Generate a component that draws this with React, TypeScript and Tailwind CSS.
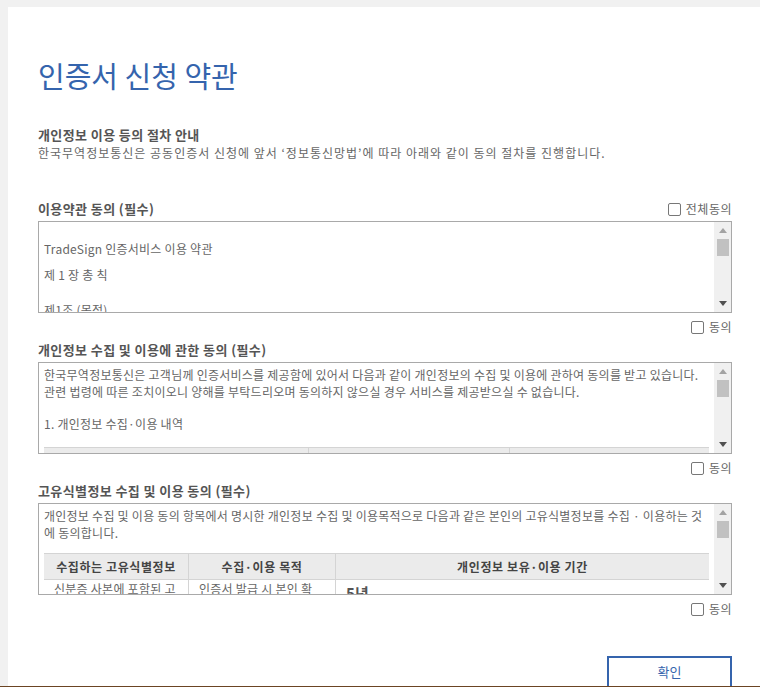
import React from "react";

const font = { fontFamily: '"Noto Sans CJK KR", "Noto Sans", sans-serif' };

const Check = ({ label }: { label: string }) => (
  <label className="flex items-center gap-[5px] text-[12px] leading-[18px] text-[#666] tracking-[0.5px]">
    <span className="w-[13px] h-[13px] border border-[#777] rounded-[2px] bg-white" />
    {label}
  </label>
);

const ScrollBar = () => (
  <div className="w-[17px] shrink-0 bg-[#f0f0f0] flex flex-col items-center">
    <div className="h-[17px] flex items-center justify-center">
      <svg width="8" height="5" viewBox="0 0 8 5">
        <path d="M0 5 L4 0 L8 5 Z" fill="#a3a3a3" />
      </svg>
    </div>
    <div className="w-[12px] h-[17px] bg-[#c1c1c1]" />
    <div className="flex-1" />
    <div className="h-[17px] flex items-center justify-center">
      <svg width="8" height="5" viewBox="0 0 8 5">
        <path d="M0 0 L8 0 L4 5 Z" fill="#505050" />
      </svg>
    </div>
  </div>
);

const Box = ({ children }: { children: React.ReactNode }) => (
  <div className="h-[92px] border border-[#a9a9a9] flex overflow-hidden bg-white">
    <div className="flex-1 overflow-hidden pl-[5px] pr-[5px] text-[12px] leading-[17px] text-[#666] tracking-[0.25px]">
      {children}
    </div>
    <ScrollBar />
  </div>
);

const Heading = ({ children }: { children: React.ReactNode }) => (
  <h3 className="text-[13px] leading-[18px] font-bold text-[#555] tracking-[0.4px]">{children}</h3>
);

export default function App() {
  return (
    <div
      className="w-[760px] h-[687px] bg-[#f1f1f1] pl-2 pt-[7px] overflow-hidden border-b border-[#6b4423] flex flex-col"
      style={font}
    >
      <div className="flex-1 bg-white pl-[30px] pr-[28px] pt-[50px] flex flex-col">
        <h1 className="text-[29px] leading-[36px] text-[#3564ad]">인증서 신청 약관</h1>

        <div className="mt-[33px]">
          <Heading>개인정보 이용 등의 절차 안내</Heading>
          <p className="text-[12px] leading-[18px] text-[#666] tracking-[1px]">
            한국무역정보통신은 공동인증서 신청에 앞서 ‘정보통신망법’에 따라 아래와 같이 동의 절차를 진행합니다.
          </p>
        </div>

        <div className="mt-[38px] flex items-center justify-between mb-[3px]">
          <Heading>이용약관 동의 (필수)</Heading>
          <Check label="전체동의" />
        </div>
        <Box>
          <p className="pt-[18px]">TradeSign 인증서비스 이용 약관</p>
          <p className="mt-[9px]">제 1 장 총 칙</p>
          <p className="mt-[18px]">제1조 (목적)</p>
        </Box>
        <div className="flex justify-end mt-[5px]">
          <Check label="동의" />
        </div>

        <div className="mt-[5px] mb-[3px]">
          <Heading>개인정보 수집 및 이용에 관한 동의 (필수)</Heading>
        </div>
        <Box>
          <p className="pt-[3px]">
            한국무역정보통신은 고객님께 인증서비스를 제공함에 있어서 다음과 같이 개인정보의 수집 및 이용에 관하여 동의를 받고 있습니다.
            <br />
            관련 법령에 따른 조치이오니 양해를 부탁드리오며 동의하지 않으실 경우 서비스를 제공받으실 수 없습니다.
          </p>
          <p className="mt-[15px]">1. 개인정보 수집·이용 내역</p>
          <div className="mt-[15px] grid grid-cols-[265px_201px_1fr] border-t border-[#d4d4d4]">
            <div className="h-[26px] bg-[#ebebeb] border-r border-[#d4d4d4]" />
            <div className="h-[26px] bg-[#ebebeb] border-r border-[#d4d4d4]" />
            <div className="h-[26px] bg-[#ebebeb]" />
          </div>
        </Box>
        <div className="flex justify-end mt-[5px]">
          <Check label="동의" />
        </div>

        <div className="mt-[5px] mb-[3px]">
          <Heading>고유식별정보 수집 및 이용 동의 (필수)</Heading>
        </div>
        <Box>
          <p className="pt-[3px] pr-[4px]">
            개인정보 수집 및 이용 동의 항목에서 명시한 개인정보 수집 및 이용목적으로 다음과 같은 본인의 고유식별정보를 수집 · 이용하는 것
            <br />
            에 동의합니다.
          </p>
          <div className="mt-[12px] grid grid-cols-[145px_147px_1fr] border-t border-[#d4d4d4]">
            <div className="h-[26px] bg-[#ebebeb] border-r border-b border-[#d4d4d4] flex items-center justify-center font-bold text-[#444] tracking-[0.6px]">
              수집하는 고유식별정보
            </div>
            <div className="h-[26px] bg-[#ebebeb] border-r border-b border-[#d4d4d4] flex items-center justify-center font-bold text-[#444] tracking-[0.6px]">
              수집·이용 목적
            </div>
            <div className="h-[26px] bg-[#ebebeb] border-b border-[#d4d4d4] flex items-center justify-center font-bold text-[#444] tracking-[0.6px]">
              개인정보 보유·이용 기간
            </div>
            <div className="border-r border-[#d4d4d4] pl-[10px] whitespace-nowrap">
              신분증 사본에 포함된 고
              <br />
              유식별정보
            </div>
            <div className="border-r border-[#d4d4d4] pl-[10px] whitespace-nowrap">
              인증서 발급 시 본인 확
              <br />
              인을 위한 정보
            </div>
            <div className="pl-[10px] pt-[4px] text-[15px] font-bold text-[#555]">5년</div>
          </div>
        </Box>
        <div className="flex justify-end mt-[5px]">
          <Check label="동의" />
        </div>

        <div className="flex justify-end mt-[38px]">
          <button className="w-[125px] h-[32px] border-2 border-[#3564ad] text-[#3564ad] text-[13px] bg-white">
            확인
          </button>
        </div>
      </div>
    </div>
  );
}
